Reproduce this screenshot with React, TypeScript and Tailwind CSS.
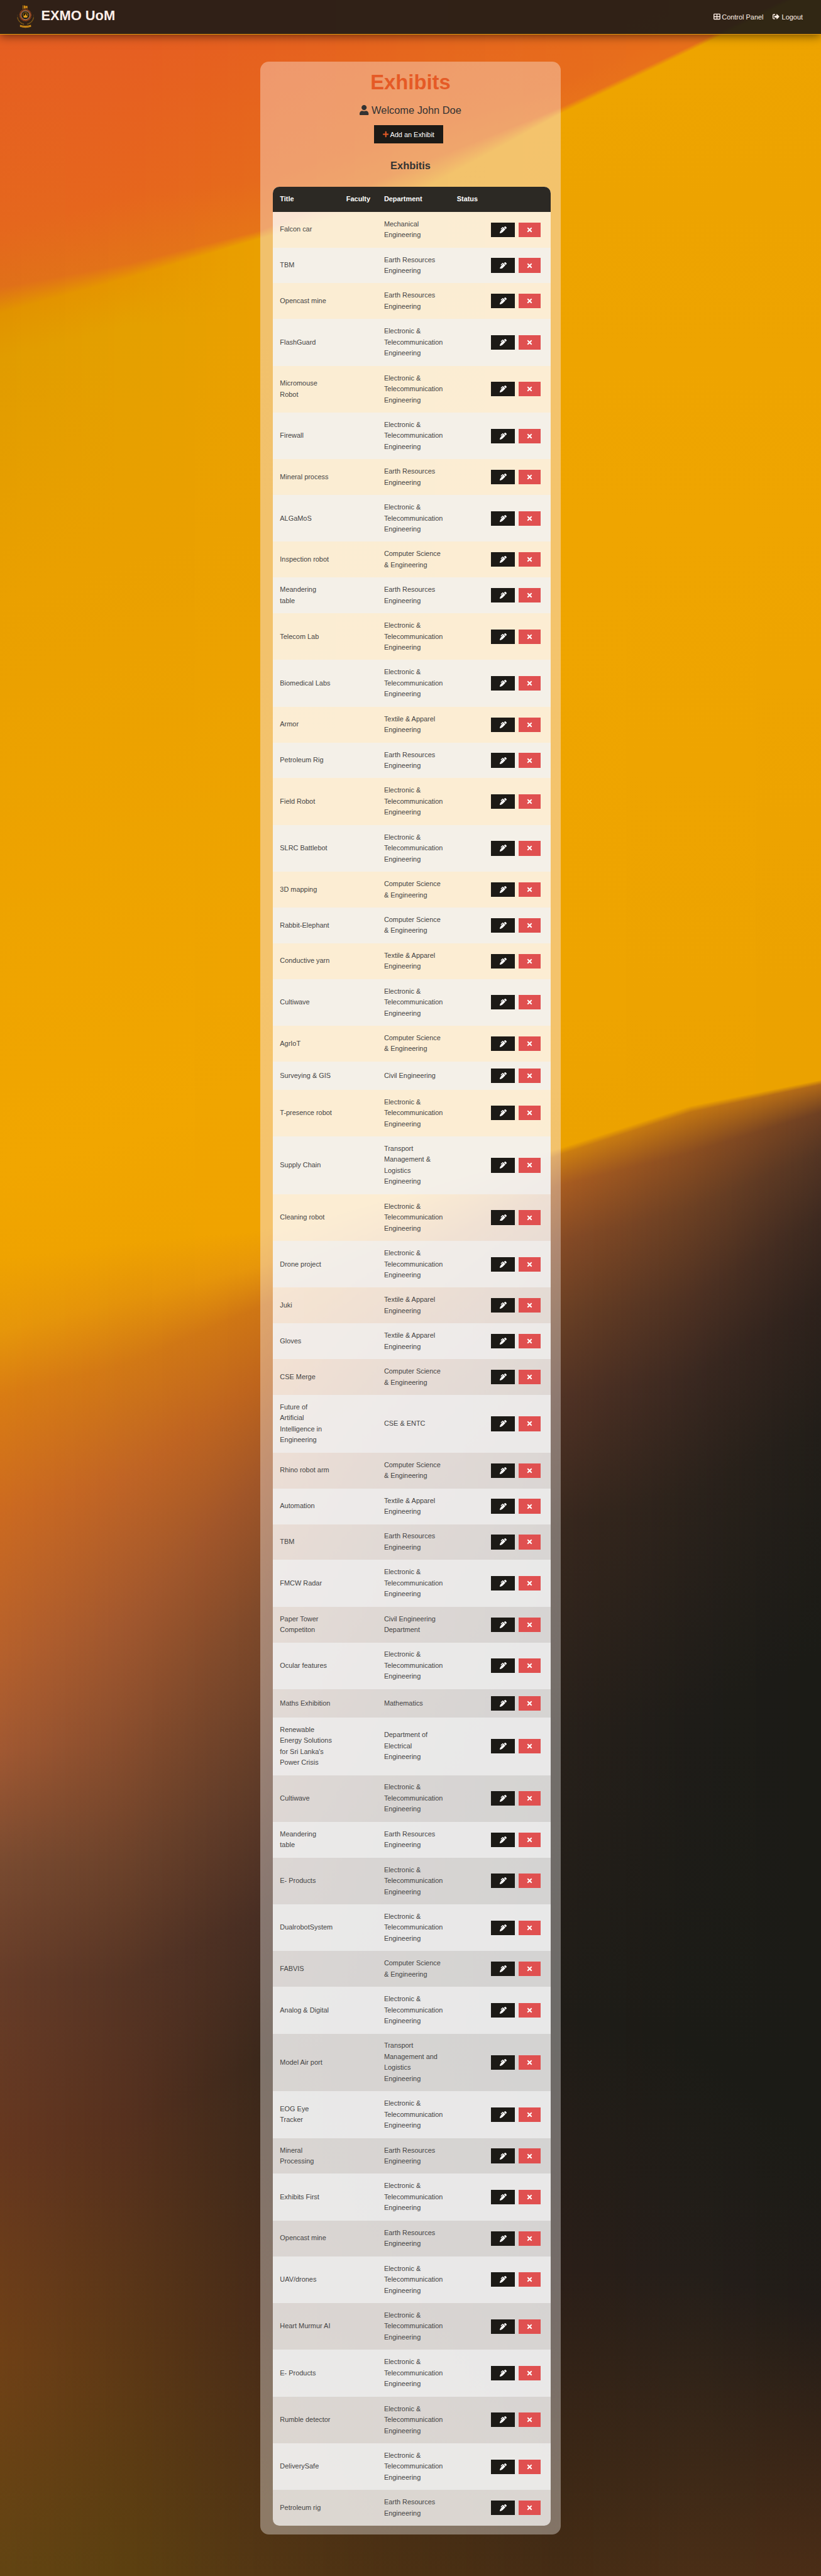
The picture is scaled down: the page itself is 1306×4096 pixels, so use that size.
import React from "react";
import { FaPenAlt, FaPlus, FaSignOutAlt, FaTimes, FaUser } from "react-icons/fa";
import { FaTableCellsLarge } from "react-icons/fa6";

const EARTH = "Earth Resources\nEngineering";
const ENTC = "Electronic &\nTelecommunication\nEngineering";
const CSE = "Computer Science\n& Engineering";
const TEXTILE = "Textile & Apparel\nEngineering";

const EXHIBITS: [string, string][] = [
  ["Falcon car", "Mechanical\nEngineering"],
  ["TBM", EARTH],
  ["Opencast mine", EARTH],
  ["FlashGuard", ENTC],
  ["Micromouse\nRobot", ENTC],
  ["Firewall", ENTC],
  ["Mineral process", EARTH],
  ["ALGaMoS", ENTC],
  ["Inspection robot", CSE],
  ["Meandering\ntable", EARTH],
  ["Telecom Lab", ENTC],
  ["Biomedical Labs", ENTC],
  ["Armor", TEXTILE],
  ["Petroleum Rig", EARTH],
  ["Field Robot", ENTC],
  ["SLRC Battlebot", ENTC],
  ["3D mapping", CSE],
  ["Rabbit-Elephant", CSE],
  ["Conductive yarn", TEXTILE],
  ["Cultiwave", ENTC],
  ["AgrIoT", CSE],
  ["Surveying & GIS", "Civil Engineering"],
  ["T-presence robot", ENTC],
  ["Supply Chain", "Transport\nManagement &\nLogistics\nEngineering"],
  ["Cleaning robot", ENTC],
  ["Drone project", ENTC],
  ["Juki", TEXTILE],
  ["Gloves", TEXTILE],
  ["CSE Merge", CSE],
  ["Future of\nArtificial\nIntelligence in\nEngineering", "CSE & ENTC"],
  ["Rhino robot arm", CSE],
  ["Automation", TEXTILE],
  ["TBM", EARTH],
  ["FMCW Radar", ENTC],
  ["Paper Tower\nCompetiton", "Civil Engineering\nDepartment"],
  ["Ocular features", ENTC],
  ["Maths Exhibition", "Mathematics"],
  ["Renewable\nEnergy Solutions\nfor Sri Lanka's\nPower Crisis", "Department of\nElectrical\nEngineering"],
  ["Cultiwave", ENTC],
  ["Meandering\ntable", EARTH],
  ["E- Products", ENTC],
  ["DualrobotSystem", ENTC],
  ["FABVIS", CSE],
  ["Analog & Digital", ENTC],
  ["Model Air port", "Transport\nManagement and\nLogistics\nEngineering"],
  ["EOG Eye\nTracker", ENTC],
  ["Mineral\nProcessing", EARTH],
  ["Exhibits First", ENTC],
  ["Opencast mine", EARTH],
  ["UAV/drones", ENTC],
  ["Heart Murmur AI", ENTC],
  ["E- Products", ENTC],
  ["Rumble detector", ENTC],
  ["DeliverySafe", ENTC],
  ["Petroleum rig", EARTH],
];

/* Wallpaper: vertical colour ramps at a few x positions; the strips between
   them interpolate both the stop positions and the colours. */
type Ramp = { x: number; stops: [number, string][] };

const RAMPS: Ramp[] = [
  { x: 0, stops: [[0, "e65e22"], [120, "e5671d"], [156, "e07019"], [172, "e19300"], [200, "e19c00"], [350, "eaa000"], [700, "f1a600"], [755, "efa300"], [800, "e6960a"], [840, "d97c13"], [910, "cc6a20"], [1000, "b5602c"], [1060, "a05832"], [1130, "784a30"], [1200, "663c28"], [1300, "65371f"], [1430, "6f4016"], [1568, "624412"]] },
  { x: 303, stops: [[0, "e65e22"], [100, "e6661d"], [141, "e37319"], [150, "e69600"], [180, "e4a000"], [320, "eaa000"], [680, "f1a600"], [745, "efa300"], [780, "e4930a"], [820, "d17815"], [890, "bf6425"], [980, "a0572e"], [1050, "884d2d"], [1130, "6a412a"], [1200, "553424"], [1290, "55301e"], [1440, "5c3815"], [1568, "5c4010"]] },
  { x: 606, stops: [[0, "e6601f"], [90, "e66a1c"], [121, "e67418"], [126, "eaa000"], [180, "eaa000"], [300, "eba100"], [650, "f0a500"], [738, "f0a300"], [760, "e7960a"], [785, "cf7614"], [830, "bf651c"], [890, "a15628"], [970, "804a2a"], [1080, "5f3b28"], [1160, "482e23"], [1250, "3b281b"], [1400, "482b18"], [1568, "533613"]] },
  { x: 956, stops: [[0, "e6651e"], [60, "e66e1d"], [82, "e67818"], [100, "eca200"], [150, "eca200"], [300, "eca200"], [620, "f0a500"], [713, "efa300"], [728, "dd8c10"], [755, "b96a1e"], [795, "9a5526"], [850, "78452a"], [910, "603c28"], [1000, "4a3022"], [1100, "36271d"], [1230, "2b221a"], [1400, "3c271a"], [1568, "4b3013"]] },
  { x: 1306, stops: [[0, "e76a1c"], [30, "e76c1c"], [45, "e8721b"], [49, "eea400"], [100, "eda300"], [300, "efa500"], [600, "eea400"], [687, "eca200"], [691, "cc7e10"], [710, "a85c20"], [745, "854a25"], [790, "693f24"], [840, "513224"], [920, "37271d"], [1050, "27201a"], [1220, "1f1c17"], [1380, "2a1e18"], [1568, "452c14"]] },
  { x: 1609, stops: [[-20, "e86d1b"], [-5, "e86e1b"], [7, "e8701b"], [10, "eea400"], [100, "eda300"], [300, "efa500"], [600, "eda300"], [661, "eca200"], [665, "c07412"], [690, "8a4d20"], [725, "6c4023"], [780, "4e3122"], [830, "3a2820"], [900, "2b221b"], [1040, "1e1c18"], [1240, "1b1b16"], [1380, "241e19"], [1568, "4a2e16"]] },
  { x: 1912, stops: [[-60, "e8701b"], [-45, "e8701b"], [-33, "e8701b"], [-30, "eea400"], [100, "eda300"], [300, "efa500"], [590, "eca200"], [645, "eba200"], [648, "b06818"], [665, "6e4022"], [690, "543523"], [730, "3e2a20"], [780, "2e221c"], [860, "221e19"], [1000, "1b1b16"], [1300, "1b1b16"], [1400, "211c18"], [1568, "4b2d16"]] },
];

const mix = (a: number, b: number, t: number) => a + (b - a) * t;
const channel = (hex: string, i: number) => parseInt(hex.slice(i * 2, i * 2 + 2), 16);

function rampAt(x: number): string {
  let k = 0;
  while (k < RAMPS.length - 2 && x > RAMPS[k + 1].x) k++;
  const a = RAMPS[k];
  const b = RAMPS[k + 1];
  const t = (x - a.x) / (b.x - a.x);
  const underPanel = x > 607 && x < 1305;
  const stops = a.stops.map(([pos, col], i) => {
    const [pos2, col2] = b.stops[i];
    const y = (80 + mix(pos, pos2, t) * 3.772) * 0.68324;
    const rgb = [0, 1, 2].map((c) => Math.round(mix(channel(col, c), channel(col2, c), t)));
    if (underPanel && rgb[0] > 200 && y > 98) rgb[2] = Math.max(rgb[2], 30);
    return `rgb(${rgb.join(",")}) ${y.toFixed(1)}px`;
  });
  return `linear-gradient(to bottom, ${stops.join(", ")})`;
}

const STRIPS = Array.from({ length: 653 }, (_, i) => rampAt(((i + 0.5) / 653) * 1912));

function Wallpaper() {
  return (
    <div className="absolute inset-0 flex">
      {STRIPS.map((background, i) => (
        <div key={i} className="h-full w-[2px] shrink-0" style={{ background }} />
      ))}
    </div>
  );
}

function Crest() {
  return (
    <svg viewBox="0 0 40 54" className="h-[37px] w-[27.3px]">
      <g fill="#d98f14">
        <rect x="13.5" y="0.5" width="1.2" height="9" />
        <rect x="16" y="1" width="3" height="7" />
        <path d="M19.5 2h5v6h-1.5l-.5-2h-1l-.5 2h-1.5z" />
      </g>
      <circle cx="19.7" cy="23.5" r="13.4" fill="none" stroke="#8e431d" strokeWidth="2.2" strokeDasharray="2 1.5" />
      <circle cx="19.7" cy="23.5" r="11.6" fill="none" stroke="#8e431d" strokeWidth="3" />
      <circle cx="19.7" cy="23.5" r="9.9" fill="#1d150e" stroke="#cbb9aa" strokeWidth="1" />
      <circle cx="19.7" cy="22.5" r="5.4" fill="none" stroke="#b37c16" strokeWidth="3" strokeDasharray="1 1" />
      <path d="M18.4 24l2.4-5.5.6 5.5 2.6 1v4.2h-8.4V25z" fill="#e5a11a" />
      <path d="M1 22q-1 18 16 23M39 22q1 18-16 23" fill="none" stroke="#51391a" strokeWidth="1" />
      <path d="M1 29q4 13 15.500 15.500M39 29q-4 13-15.500 15.500" fill="none" stroke="#8a6118" strokeWidth="2.4" strokeDasharray="1.4 .7" />
      <path d="M7 46q12.700 4.500 25.500 0l.5 4.500q-13 5-26 0z" fill="#cf8b17" />
      <path d="M9.500 49.700q10.200 3 20.500 0" fill="none" stroke="#5a3b12" strokeWidth="1" strokeDasharray="1.600 1" />
    </svg>
  );
}

function TopBar() {
  return (
    <header className="relative flex h-[54.65px] items-center justify-between border-b border-[#e59a10] bg-[#1c1a16]/90 pl-[26.6px] pr-[29px] shadow-[0_3px_14px_rgba(0,0,0,0.5)]">
      <div className="flex items-center">
        <Crest />
        <span className="ml-[11.5px] -mt-[4.5px] text-[21.86px] leading-[35px] font-bold text-[#ffefe9]">EXMO UoM</span>
      </div>
      <nav className="flex items-center text-[10.93px] text-[#ffefe6]">
        <a className="flex items-center">
          <FaTableCellsLarge className="mr-[2.4px] size-[10.93px]" />
          Control Panel
        </a>
        <a className="ml-[15px] flex items-center">
          <FaSignOutAlt className="mr-[3.2px] size-[10.93px]" />
          Logout
        </a>
      </nav>
    </header>
  );
}

const COLUMNS = "grid grid-cols-[105.5px_60.1px_115.8px_54.6px_1fr] items-center";

function ExhibitRow({ title, department, even }: { title: string; department: string; even: boolean }) {
  return (
    <div className={`${COLUMNS} min-h-[44.85px] ${even ? "bg-[#f1f1f1]/70" : ""}`}>
      <div className="px-[10.93px] py-[10.94px] whitespace-pre">{title}</div>
      <div />
      <div className="px-[10.93px] py-[10.94px] whitespace-pre">{department}</div>
      <div />
      <div className="flex gap-[5.4px] pl-[10.93px] text-white">
        <button className="flex h-[23.2px] w-[38.2px] items-center justify-center bg-[#1c1a16]">
          <FaPenAlt className="size-[10.93px]" />
        </button>
        <button className="flex h-[23.2px] w-[34.9px] items-center justify-center bg-[#e05050]">
          <FaTimes className="size-[10.93px]" />
        </button>
      </div>
    </div>
  );
}

export default function App() {
  return (
    <div className="relative h-[4096px] w-[1306px] overflow-hidden bg-[#1c1a16] font-['Liberation_Sans',Arial,sans-serif]">
      <Wallpaper />
      <TopBar />
      <main className="relative mx-auto mt-[43.75px] flex h-[3932px] w-[478.2px] flex-col items-center rounded-[13.7px] bg-white/35 pt-[6.83px] text-[#333]">
        <h1 className="h-[52.5px] text-[32.8px] leading-[52.5px] font-bold text-[#e55a26]">Exhibits</h1>
        <p className="mt-[4.4px] flex h-[26.2px] items-center text-[16.4px] leading-[26.2px]">
          <FaUser className="mr-[4.6px] h-[16.4px] w-[14.35px]" />
          Welcome John Doe
        </p>
        <button className="mt-[11.2px] mr-[6.2px] flex h-[28.7px] w-[110px] shrink-0 items-center pl-[14px] bg-[#1c1a16] text-[10.93px] text-white">
          <FaPlus className="mr-[2px] h-[10.93px] w-[9.56px] text-[#e55a26]" />
          Add an Exhibit
        </button>
        <h2 className="mt-[21.5px] h-[26.2px] text-[16.4px] leading-[26.2px] font-bold">Exhbitis</h2>
        <section className="mt-[21.3px] ml-[4.8px] w-[442px] shrink-0 overflow-hidden rounded-[10.2px] bg-white/70 text-[10.93px] leading-[17.49px] text-[#444]">
          <div className={`${COLUMNS} h-[39.6px] bg-[#2c2924] font-bold text-white`}>
            <div className="px-[10.93px]">Title</div>
            <div className="px-[10.93px]">Faculty</div>
            <div className="px-[10.93px]">Department</div>
            <div className="px-[10.93px]">Status</div>
            <div />
          </div>
          {EXHIBITS.map(([title, department], i) => (
            <ExhibitRow key={i} title={title} department={department} even={i % 2 === 1} />
          ))}
        </section>
      </main>
    </div>
  );
}
